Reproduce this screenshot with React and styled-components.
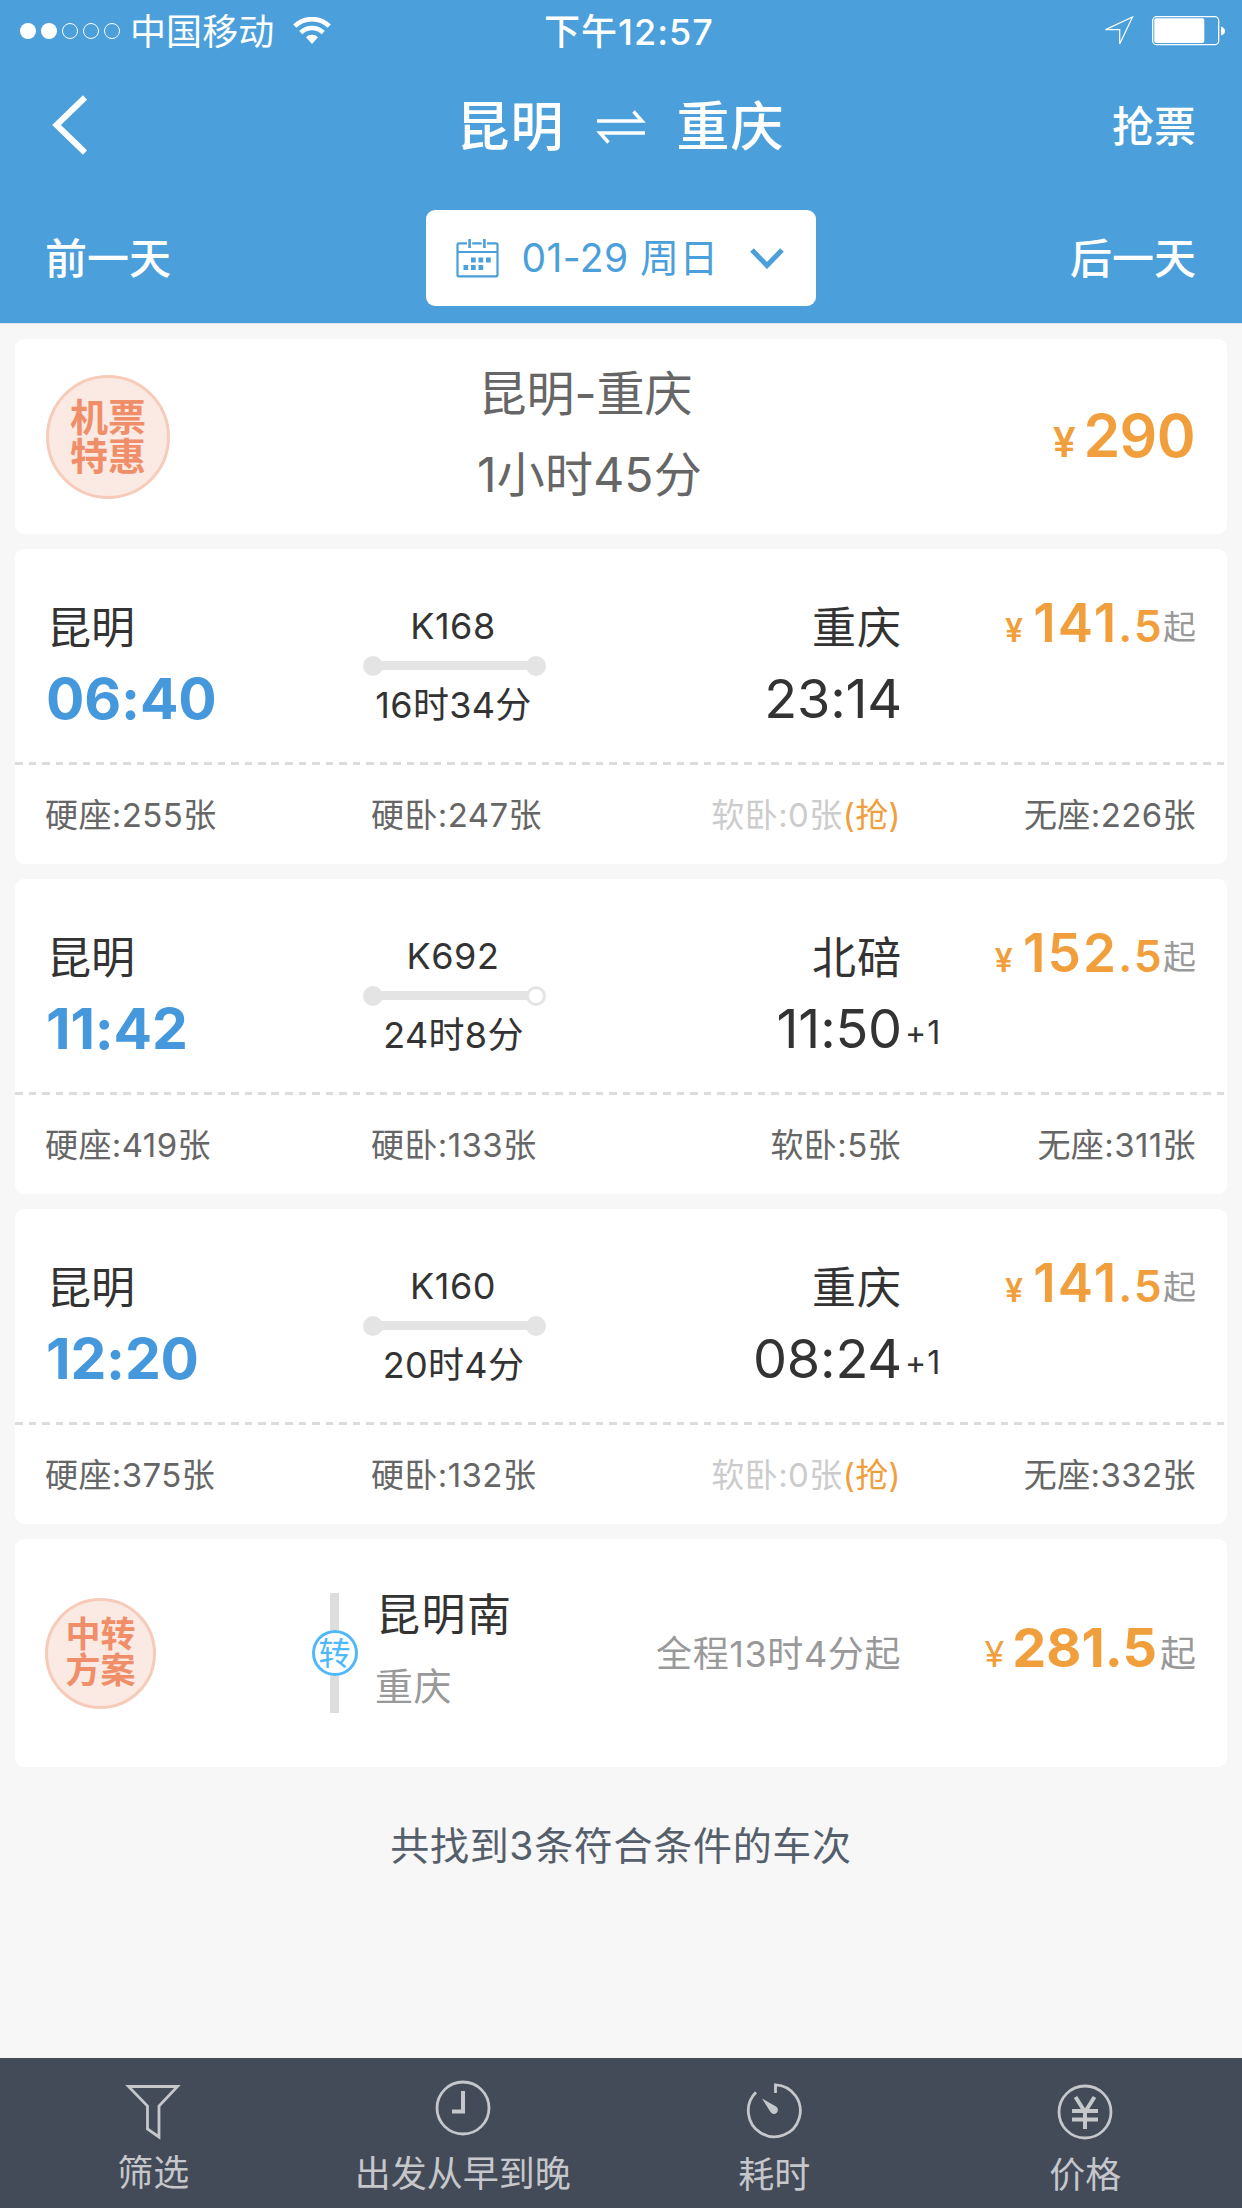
import React from 'react';
import styled, { createGlobalStyle } from 'styled-components';

const trains = [
    {
        id: 'K168', from: '昆明', depart: '06:40', duration: '16时34分',
        to: '重庆', arrive: '23:14', price: '141', cents: '.5',
        seats: [['硬座', 255], ['硬卧', 247], ['软卧', 0], ['无座', 226]],
    },
    {
        id: 'K692', from: '昆明', depart: '11:42', duration: '24时8分', passing: true,
        to: '北碚', arrive: '11:50', days: '+1', price: '152', cents: '.5',
        seats: [['硬座', 419], ['硬卧', 133], ['软卧', 5], ['无座', 311]],
    },
    {
        id: 'K160', from: '昆明', depart: '12:20', duration: '20时4分',
        to: '重庆', arrive: '08:24', days: '+1', price: '141', cents: '.5',
        seats: [['硬座', 375], ['硬卧', 132], ['软卧', 0], ['无座', 332]],
    },
];

const BLUE = '#4b9fda';
const ORANGE = '#f19f3d';

const GlobalStyle = createGlobalStyle`
    * {
        box-sizing: border-box;
    }

    body {
        margin: 0;
        background: #f7f7f7;
        font-family: Inter, "Noto Sans CJK SC", sans-serif;
        color: #333;
    }
`;

const Page = styled.div`
    display: flex;
    flex-direction: column;
    width: 1242px;
    height: 2208px;
    overflow: hidden;
`;

const Header = styled.header`
    height: 324px;
    background: ${BLUE};
    border-bottom: 1px solid #d9e3ea;
    color: #fff;
`;

const StatusBar = styled.div`
    display: grid;
    grid-template-columns: 1fr auto 1fr;
    height: 60px;
    padding: 0 16px 0 20px;
    align-items: center;
    font-size: 36px;
    line-height: 60px;
`;

const StatusSide = styled.div`
    display: flex;
    align-items: center;
    gap: ${({ $end }) => ($end ? 18 : 0)}px;
    justify-content: ${({ $end }) => ($end ? 'flex-end' : 'flex-start')};
`;

const Carrier = styled.span`
    margin: 2px 19px 0 9px;
    letter-spacing: 0.1px;
`;

const Clock = styled.div`
    padding: 2px 0 0 12px;
    font-weight: 500;
    letter-spacing: 1px;
`;

const NavBar = styled.div`
    display: grid;
    grid-template-columns: 1fr auto 1fr;
    height: 130px;
    padding: 0 46px 0 50px;
    align-items: center;
`;

const Title = styled.h1`
    display: flex;
    align-items: center;
    gap: 31px;
    margin: 4px 5px 0 0;
    font-size: 53px;
    line-height: 60px;
    font-weight: 500;
    letter-spacing: 1px;
`;

const NavLink = styled.a`
    justify-self: ${({ $end }) => ($end ? 'end' : 'start')};
    padding-top: ${({ $top }) => $top || 0}px;
    font-size: 42px;
    line-height: 60px;
    font-weight: 500;
`;

const DateBar = styled.div`
    display: grid;
    grid-template-columns: 1fr 390px 1fr;
    height: 96px;
    margin-top: 20px;
    padding: 0 46px 0 45px;
    align-items: center;
`;

const DateButton = styled.div`
    display: flex;
    align-items: center;
    height: 96px;
    padding: 0 32px 0 30px;
    border-radius: 9px;
    background: #fff;
    color: ${BLUE};
    font-size: 39px;
    letter-spacing: 0.4px;
`;

const DateLabel = styled.span`
    flex: 1;
    margin: 0 0 0 23px;
    line-height: 60px;
    white-space: nowrap;
`;

const List = styled.main`
    display: flex;
    flex: 1;
    flex-direction: column;
    gap: 15px;
    padding: 15px 15px 0;
`;

const Card = styled.section`
    border-radius: 9px;
    background: #fff;
`;

const FlightCard = styled(Card)`
    display: grid;
    grid-template-columns: 124px 1fr 124px;
    height: 195px;
    padding: 0 32px 0 31px;
    align-items: center;
`;

const Stamp = styled.div`
    display: flex;
    align-items: center;
    justify-content: center;
    width: ${({ $size }) => $size}px;
    height: ${({ $size }) => $size}px;
    border: 3px solid #f7cbb9;
    border-radius: 50%;
    background: #fbe9e3;
    color: #ef8e68;
    font-size: ${({ $font }) => $font}px;
    line-height: 1.02;
    font-weight: 700;
`;

const StampText = styled.span`
    width: 2em;
    word-break: break-all;
`;

const FlightInfo = styled.div`
    display: flex;
    flex-direction: column;
    align-items: center;
    padding: 0 70px 5px 0;
    color: #666;
    font-size: 48px;
    line-height: 81px;
`;

const FlightTime = styled.span`
    padding-left: 8px;
    letter-spacing: 0.2px;
`;

const Price = styled.div`
    display: flex;
    align-items: baseline;
    justify-content: flex-end;
    color: ${ORANGE};
    font-size: ${({ $size }) => $size}px;
    line-height: 60px;
    font-weight: ${({ $weight }) => $weight || 600};
    white-space: nowrap;
`;

const FlightPrice = styled(Price)`
    padding-top: 4px;
    letter-spacing: -0.6px;
`;

const TrainPrice = styled(Price)`
    margin-top: -4px;
    letter-spacing: 2.2px;
`;

const TransferPrice = styled(Price)`
    padding-bottom: 5px;
`;

const Yuan = styled.span`
    margin-right: 8px;
    font-size: ${({ $size }) => $size}px;
    font-weight: ${({ $weight }) => $weight || 600};
`;

const Cents = styled.span`
    font-size: 44px;
`;

const From = styled.span`
    align-self: flex-start;
    margin: ${({ $top }) => $top}px 0 0 ${({ $left }) => $left}px;
    color: #999;
    font-size: ${({ $size }) => $size}px;
    font-weight: 400;
    letter-spacing: 0;
`;

const TrainCard = styled(Card)`
    height: 315px;
`;

const Trip = styled.div`
    display: grid;
    grid-template-columns: 317px 183px 356px 1fr;
    height: 213px;
    padding: 48px 31px 0 31px;
`;

const Stop = styled.div`
    display: flex;
    flex-direction: column;
    gap: 12px;
    align-items: ${({ $end }) => ($end ? 'flex-end' : 'flex-start')};
`;

const Station = styled.div`
    padding: ${({ $end }) => ($end ? '2px 0 0' : '2px 0 0 1px')};
    font-size: 44px;
    line-height: 58px;
    letter-spacing: ${({ $spacing }) => $spacing || 0}px;
`;

const Time = styled.div`
    position: relative;
    color: ${({ $depart }) => ($depart ? '#4498db' : '#333')};
    font-size: ${({ $depart }) => ($depart ? 57 : 54)}px;
    line-height: 60px;
    font-weight: ${({ $depart }) => ($depart ? 700 : 400)};
    letter-spacing: -0.2px;
`;

const DayOffset = styled.span`
    position: absolute;
    top: 4px;
    left: 100%;
    margin-left: 3px;
    font-size: 32px;
    letter-spacing: 1px;
`;

const Route = styled.div`
    display: flex;
    flex-direction: column;
    align-items: center;
    padding-top: 11px;
    font-size: 36px;
    line-height: 36px;
`;

const TrainId = styled.span`
    margin-right: 3px;
    letter-spacing: 0.5px;
`;

const Duration = styled.span`
    margin-right: 2px;
    letter-spacing: 0.3px;
`;

const Track = styled.div`
    display: flex;
    align-items: center;
    width: 183px;
    height: 19px;
    margin: 12px 0;
`;

const Dot = styled.i`
    width: 20px;
    height: 20px;
    border: 3px solid #e4e4e4;
    border-radius: 50%;
    background: ${({ $hollow }) => ($hollow ? '#fff' : '#e4e4e4')};
`;

const Rail = styled.i`
    flex: 1;
    height: 9px;
    margin: 0 -1px;
    background: #e4e4e4;
`;

const Dashes = styled.div`
    height: 3px;
    background: repeating-linear-gradient(90deg, #dcdcdc 0 7.5px, transparent 7.5px 13.5px);
`;

const Seats = styled.div`
    display: grid;
    grid-template-columns: 326px 228px 302px 1fr;
    height: 99px;
    padding: 0 31px 0 30px;
    color: #666;
    font-size: 33px;
    line-height: 101px;
    letter-spacing: 0.4px;
`;

const Seat = styled.div`
    justify-self: ${({ $end }) => ($end ? 'end' : 'start')};
    color: ${({ $empty }) => ($empty ? '#ccc' : '#666')};
    white-space: nowrap;
`;

const Grab = styled.span`
    color: ${ORANGE};
`;

const TransferCard = styled(Card)`
    display: grid;
    grid-template-columns: 267px 45px 18px 210px 1fr 295px;
    height: 228px;
    padding: 0 31px 0 30px;
    align-items: center;
`;

const TransferLine = styled.div`
    display: flex;
    flex-direction: column;
    align-items: center;
    height: 120px;

    &::before,
    &::after {
        content: '';
        flex: 1;
        width: 9px;
        background: #ddd;
    }
`;

const TransferMark = styled.div`
    width: 46px;
    height: 46px;
    border: 3px solid #4fb8fa;
    border-radius: 50%;
    color: #4fb8fa;
    font-size: 32px;
    line-height: 42px;
    text-align: center;
`;

const TransferStops = styled.div`
    grid-column: 4;
    display: flex;
    flex-direction: column;
    gap: 12px;
    padding-bottom: 6px;
`;

const TransferTo = styled.div`
    color: #999;
    font-size: 38px;
    line-height: 60px;
    letter-spacing: 0.5px;
`;

const TotalTime = styled.div`
    justify-self: end;
    padding-bottom: 4px;
    color: #999;
    font-size: 36px;
    letter-spacing: 0.6px;
    white-space: nowrap;
`;

const Summary = styled.p`
    margin: 34px 0 0;
    color: #555e6b;
    font-size: 39px;
    line-height: 60px;
    letter-spacing: 0.7px;
    text-align: center;
`;

const TabBar = styled.nav`
    display: grid;
    grid-template-columns: repeat(4, 1fr);
    height: 150px;
    background: #434a58;
    color: #c5c7cb;
`;

const Tab = styled.div`
    display: flex;
    flex-direction: column;
    align-items: center;
    padding: ${({ $top }) => $top}px ${({ $shift }) => $shift}px 0 0;
    font-size: 36px;
    line-height: 40px;

    svg {
        margin-bottom: ${({ $gap }) => $gap}px;
    }
`;

const SignalDots = () => (
    <svg width="101" height="18" viewBox="0 0 101 18" fill="none" stroke="#fff">
        <circle cx="8" cy="9" r="8" fill="#fff" stroke="none" />
        <circle cx="29" cy="9" r="8" fill="#fff" stroke="none" />
        <circle cx="50" cy="9" r="7.5" />
        <circle cx="71" cy="9" r="7.5" />
        <circle cx="92" cy="9" r="7.5" />
    </svg>
);

const Wifi = () => (
    <svg width="38" height="28" viewBox="0 0 38 28" fill="none" stroke="#fff" strokeWidth="4.6">
        <path d="M1.8 9.2a24.5 24.5 0 0 1 34.4 0" />
        <path d="M7.8 15.6a16 16 0 0 1 22.4 0" />
        <path d="M13 20.3a8.6 8.6 0 0 1 12 0L19 27z" fill="#fff" stroke="none" />
    </svg>
);

const LocationArrow = () => (
    <svg width="30" height="30" viewBox="0 0 30 30" fill="none" stroke="#fff" strokeWidth="1.2">
        <path d="M28.5 1 1.5 13.6h14.2V28z" />
    </svg>
);

const Battery = () => (
    <svg width="74" height="30" viewBox="0 0 74 30">
        <rect x="0.7" y="0.7" width="66" height="28" rx="4" fill="none" stroke="#fff" strokeWidth="1.3" />
        <rect x="2.3" y="2.3" width="50" height="24.8" rx="2" fill="#fff" />
        <path d="M69 10.5q4 1 4 4.5t-4 4.5z" fill="#fff" />
    </svg>
);

const BackIcon = () => (
    <svg width="38" height="60" viewBox="0 0 38 60" fill="none" stroke="#fff" strokeWidth="6">
        <path d="M35 2.5 6.5 30 35 57.5" />
    </svg>
);

const SwapIcon = () => (
    <svg width="50" height="34" viewBox="0 0 50 34" fill="none" stroke="#fff" strokeWidth="3.4">
        <path d="M1 11h45L37.500 1.500M49 23H4l8.500 9.500" />
    </svg>
);

const CalendarIcon = () => (
    <svg width="43" height="39" viewBox="0 0 43 39" fill="none" stroke={BLUE} strokeWidth="2.2">
        <path d="M11 4.300H3a1.500 1.500 0 0 0-1.500 1.500v30A1.500 1.500 0 0 0 3 37.300h37a1.500 1.500 0 0 0 1.500-1.500v-30A1.500 1.500 0 0 0 40 4.300h-9M16.200 4.300h9.500M2.500 13h38" />
        <path d="M13.600 0v9M28.400 0v9" strokeWidth="2.600" />
        <path d="M15 21h4.700m2.800 0h4.700m2.800 0h4.700M7.500 28.500h4.700m2.800 0h4.700m2.800 0h4.700" strokeWidth="4.800" />
    </svg>
);

const DownIcon = () => (
    <svg width="34" height="22" viewBox="0 0 34 22" fill="none" stroke={BLUE} strokeWidth="5">
        <path d="M2 3 17 18.500 32 3" />
    </svg>
);

const FilterIcon = () => (
    <svg width="56" height="56" viewBox="0 0 56 56" fill="none" stroke="currentColor" strokeWidth="2.8">
        <path d="M3.500 2.500h49L34 22v31L22.500 45V22z" />
    </svg>
);

const ClockIcon = () => (
    <svg width="56" height="56" viewBox="0 0 56 56" fill="none" stroke="currentColor" strokeWidth="2.8">
        <circle cx="28" cy="28" r="26" />
        <path d="M28 11v20.500H17" strokeWidth="4" />
    </svg>
);

const TimerIcon = () => (
    <svg width="56" height="56" viewBox="0 0 56 56" fill="none" stroke="currentColor" strokeWidth="2.8">
        <path d="M29.500 10V1.800A26 26 0 1 1 10 9.300" />
        <path d="M16 15.500 30 23.500a4 4 0 1 1-5.500 5.500z" fill="currentColor" stroke="none" />
    </svg>
);

const YuanIcon = () => (
    <svg width="56" height="56" viewBox="0 0 56 56" fill="none" stroke="currentColor" strokeWidth="2.8">
        <circle cx="28" cy="28" r="26" />
        <path d="M18.500 13 28 28l9.500-15M28 27v18M15 27h26M15 35.500h26" strokeWidth="4" />
    </svg>
);

const tabs = [
    { label: '筛选', icon: <FilterIcon />, top: 26, gap: 13, shift: 4 },
    { label: '出发从早到晚', icon: <ClockIcon />, top: 22, gap: 18, shift: 6 },
    { label: '耗时', icon: <TimerIcon />, top: 25, gap: 16, shift: 4 },
    { label: '价格', icon: <YuanIcon />, top: 26, gap: 15, shift: 3 },
];

const Train = ({ train }) => (
    <TrainCard>
        <Trip>
            <Stop>
                <Station>{train.from}</Station>
                <Time $depart>{train.depart}</Time>
            </Stop>
            <Route>
                <TrainId>{train.id}</TrainId>
                <Track>
                    <Dot />
                    <Rail />
                    <Dot $hollow={train.passing} />
                </Track>
                <Duration>{train.duration}</Duration>
            </Route>
            <Stop $end>
                <Station $end $spacing={1}>{train.to}</Station>
                <Time>
                    {train.arrive}
                    {train.days && <DayOffset>{train.days}</DayOffset>}
                </Time>
            </Stop>
            <TrainPrice $size={53}>
                <Yuan $size={32}>¥</Yuan>
                {train.price}
                <Cents>{train.cents}</Cents>
                <From $size={33} $top={4} $left={-1}>起</From>
            </TrainPrice>
        </Trip>
        <Dashes />
        <Seats>
            {train.seats.map(([name, count], key) => (
                <Seat key={name} $end={key > 1} $empty={count === 0}>
                    {name}:{count}张{count === 0 && <Grab>(抢)</Grab>}
                </Seat>
            ))}
        </Seats>
    </TrainCard>
);

const App = () => (
    <Page>
        <GlobalStyle />
        <Header>
            <StatusBar>
                <StatusSide>
                    <SignalDots />
                    <Carrier>中国移动</Carrier>
                    <Wifi />
                </StatusSide>
                <Clock>下午12:57</Clock>
                <StatusSide $end>
                    <LocationArrow />
                    <Battery />
                </StatusSide>
            </StatusBar>
            <NavBar>
                <BackIcon />
                <Title>
                    <span>昆明</span>
                    <SwapIcon />
                    <span>重庆</span>
                </Title>
                <NavLink $end $top={3}>抢票</NavLink>
            </NavBar>
            <DateBar>
                <NavLink $top={1}>前一天</NavLink>
                <DateButton>
                    <CalendarIcon />
                    <DateLabel>01-29 周日</DateLabel>
                    <DownIcon />
                </DateButton>
                <NavLink $end $top={1}>后一天</NavLink>
            </DateBar>
        </Header>

        <List>
            <FlightCard>
                <Stamp $size={124} $font={38}>
                    <StampText>机票特惠</StampText>
                </Stamp>
                <FlightInfo>
                    <span>昆明-重庆</span>
                    <FlightTime>1小时45分</FlightTime>
                </FlightInfo>
                <FlightPrice $size={59}>
                    <Yuan $size={41}>¥</Yuan>
                    290
                </FlightPrice>
            </FlightCard>

            {trains.map(train => <Train key={train.id} train={train} />)}

            <TransferCard>
                <Stamp $size={111} $font={35}>
                    <StampText>中转方案</StampText>
                </Stamp>
                <TransferLine>
                    <TransferMark>转</TransferMark>
                </TransferLine>
                <TransferStops>
                    <Station $spacing={1.5}>昆明南</Station>
                    <TransferTo>重庆</TransferTo>
                </TransferStops>
                <TotalTime>全程13时4分起</TotalTime>
                <TransferPrice $size={54} $weight={700}>
                    <Yuan $size={36} $weight={400}>¥</Yuan>
                    281.5
                    <From $size={36} $top={6} $left={3}>起</From>
                </TransferPrice>
            </TransferCard>

            <Summary>共找到3条符合条件的车次</Summary>
        </List>

        <TabBar>
            {tabs.map(({ label, icon, top, gap, shift }) => (
                <Tab key={label} $top={top} $gap={gap} $shift={shift}>
                    {icon}
                    {label}
                </Tab>
            ))}
        </TabBar>
    </Page>
);

export default App;
